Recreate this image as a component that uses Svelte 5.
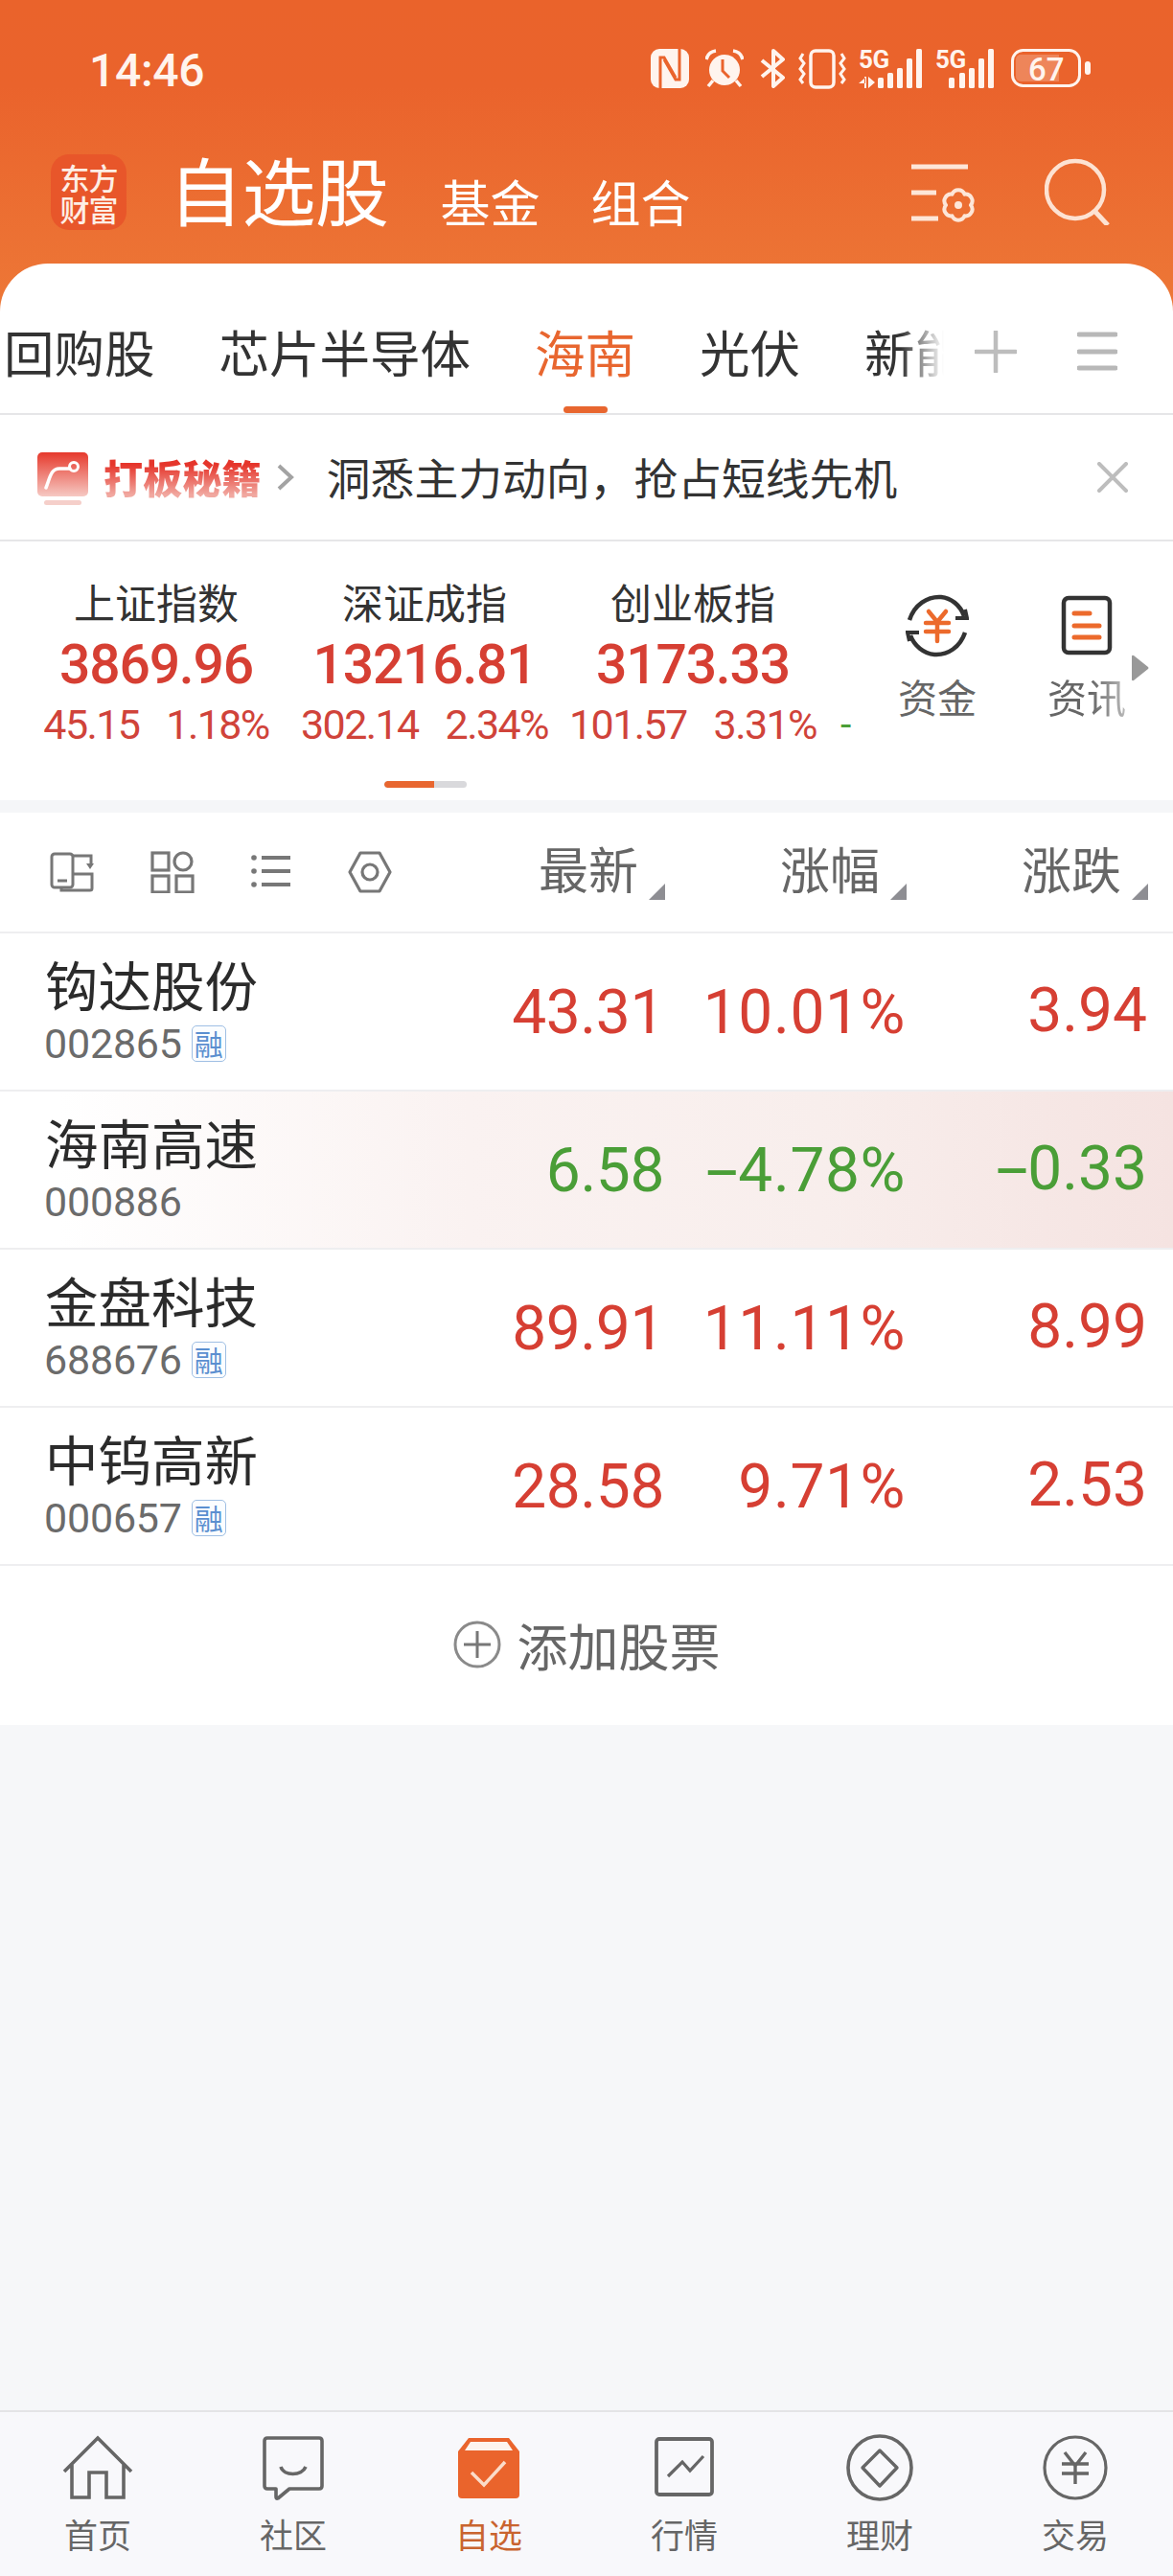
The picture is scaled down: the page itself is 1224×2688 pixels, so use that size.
<script>
  const tabs = ['回购股', '芯片半导体', '海南', '光伏', '新能源'];
  const indices = [
    { name: '上证指数', value: '3869.96', change: '45.15', pct: '1.18%' },
    { name: '深证成指', value: '13216.81', change: '302.14', pct: '2.34%' },
    { name: '创业板指', value: '3173.33', change: '101.57', pct: '3.31%' }
  ];
  const stocks = [
    { name: '钩达股份', code: '002865', tag: true, price: '43.31', pct: '10.01%', diff: '3.94', up: true },
    { name: '海南高速', code: '000886', tag: false, price: '6.58', pct: '4.78%', diff: '0.33', up: false, flash: true },
    { name: '金盘科技', code: '688676', tag: true, price: '89.91', pct: '11.11%', diff: '8.99', up: true },
    { name: '中钨高新', code: '000657', tag: true, price: '28.58', pct: '9.71%', diff: '2.53', up: true }
  ];
</script>

<div class="app">
  <div class="shell">
    <div class="status">
      <span class="time">14:46</span>
      <div class="sys">
        <svg class="nfc" width="40" height="41" viewBox="0 0 40 41"><rect width="40" height="41" rx="9" fill="#fff4ee"/><path d="M10 41V9h4l12 21M30 0v32h-4L14 11" fill="none" stroke="#ea632c" stroke-width="3"/></svg>
        <svg class="alarm" width="40" height="41" viewBox="0 0 40 41"><circle cx="20" cy="22" r="16" fill="#fff4ee"/><path d="M1 11Q3 3 11 2M39 11Q37 3 29 2M8 33l-5 6M32 33l5 6" fill="none" stroke="#fff4ee" stroke-width="3.5"/><path d="M18 11v12l7 7" fill="none" stroke="#ea632c" stroke-width="3"/></svg>
        <svg class="bt" width="28" height="41" viewBox="0 0 28 41"><path d="M3 12l22 18-10 9V2l10 9L3 29" fill="none" stroke="#fff4ee" stroke-width="4" stroke-linejoin="round"/></svg>
        <svg class="vib" width="50" height="42" viewBox="0 0 50 42"><rect x="13" y="2" width="24" height="38" rx="5" fill="none" stroke="#fff4ee" stroke-width="3.5"/><path d="M5 5l-3 5 4 5-4 6 4 5-4 6 3 4M45 5l3 5-4 5 4 6-4 5 4 6-3 4" fill="none" stroke="#fff4ee" stroke-width="3"/></svg>
        <svg class="sig" width="66" height="41" viewBox="0 0 66 41"><text x="0" y="20" class="g5">5G</text><path d="M7 30l-7 6h7zM6 29h2v12H6zM10 29v12l7-6z" fill="#fff4ee"/><rect x="20" y="30" width="6" height="11" rx="1.5"/><rect x="30" y="25" width="6" height="16" rx="1.5"/><rect x="40" y="20" width="6" height="21" rx="1.5"/><rect x="50" y="10" width="6" height="31" rx="1.5"/><rect x="60" y="0" width="6" height="41" rx="1.5"/></svg>
        <svg class="sig2" width="61" height="41" viewBox="0 0 61 41"><text x="0" y="20" class="g5">5G</text><rect x="14" y="30" width="6" height="11" rx="1.5"/><rect x="25" y="25" width="6" height="16" rx="1.5"/><rect x="35" y="20" width="6" height="21" rx="1.5"/><rect x="45" y="10" width="6" height="31" rx="1.5"/><rect x="55" y="0" width="6" height="41" rx="1.5"/></svg>
        <svg class="bat" width="83" height="41" viewBox="0 0 83 41"><rect x="1.5" y="1.5" width="70" height="37" rx="11" fill="none" stroke="#fff4ee" stroke-width="3"/><path d="M10 6h40v28H10a5 5 0 0 1-5-5V11a5 5 0 0 1 5-5z" fill="#fff" fill-opacity=".22"/><text x="18" y="33" class="b67">67</text><rect x="77" y="13" width="6" height="14" rx="3" fill="#fff4ee"/></svg>
      </div>
    </div>

    <div class="head">
      <div class="logo"><span>东方</span><span>财富</span></div>
      <span class="title">自选股</span>
      <span class="sub first">基金</span>
      <span class="sub">组合</span>
      <svg class="cfg" width="70" height="64" viewBox="0 0 70 64"><path d="M0 3h59M0 30h26M0 57h28" stroke="#fde6d8" stroke-width="5" fill="none"/><path d="M55.500 31.700A7 7 0 0 1 62 43A7 7 0 0 1 55.500 54.300A7 7 0 0 1 42.500 54.300A7 7 0 0 1 36 43A7 7 0 0 1 42.500 31.700A7 7 0 0 1 55.500 31.700Z" fill="none" stroke="#fde6d8" stroke-width="4" stroke-linejoin="round"/><circle cx="49" cy="43" r="4" fill="#fde6d8"/></svg>
      <svg class="search" width="70" height="70" viewBox="0 0 70 70"><circle cx="32" cy="33" r="30" fill="none" stroke="#fde2d2" stroke-width="4.5"/><path d="M53 56l13 14" stroke="#fde2d2" stroke-width="5"/></svg>
    </div>

    <div class="panel">
      <div class="tabbar">
        <div class="tabs">
          {#each tabs as t}
            <span class="tab" class:on={t === '海南'}>{t}</span>
          {/each}
        </div>
        <svg class="plus" width="44" height="44" viewBox="0 0 44 44"><path d="M22 1v42M1 22h42" stroke="#bdbdbd" stroke-width="4.5" stroke-linecap="round"/></svg>
        <svg class="lines" width="42" height="42" viewBox="0 0 42 42"><path d="M2 3h38M2 21h38M2 38h38" stroke="#b8b8b8" stroke-width="5" stroke-linecap="round"/></svg>
      </div>

      <div class="banner">
        <svg class="bicon" width="54" height="55" viewBox="0 0 54 55">
          <defs><linearGradient id="bg" x1="0" y1="0" x2="0" y2="1"><stop offset="0" stop-color="#e6392c"/><stop offset="1" stop-color="#f6c9c3"/></linearGradient></defs>
          <rect width="53" height="46" rx="5" fill="url(#bg)"/><rect x="7" y="50" width="39" height="5" rx="2.5" fill="#f5cfca"/>
          <path d="M9 37c4-10 5-20 14-20h11" fill="none" stroke="#fff" stroke-width="3.5" stroke-linecap="round"/><circle cx="38" cy="15" r="4.5" fill="none" stroke="#fff" stroke-width="3"/>
        </svg>
        <span class="btitle">打板秘籍</span>
        <svg class="chev" width="18" height="28" viewBox="0 0 18 28"><path d="M2 2l13 12L2 26" fill="none" stroke="#a3a3a3" stroke-width="4"/></svg>
        <span class="btext">洞悉主力动向，抢占短线先机</span>
        <svg class="close" width="32" height="32" viewBox="0 0 32 32"><path d="M2 2l28 28M30 2L2 30" stroke="#bdbdbd" stroke-width="4" stroke-linecap="round"/></svg>
      </div>

      <div class="market">
        <div class="mrow">
          {#each indices as m}
            <div class="idx">
              <span class="iname">{m.name}</span>
              <span class="ival">{m.value}</span>
              <div class="isub"><span>{m.change}</span><span>{m.pct}</span></div>
            </div>
          {/each}
          <div class="peek">-</div>
          <div class="short">
            <svg width="66" height="66" viewBox="0 0 66 66">
              <path d="M4 27C9 11 23 2 37 3c10 1 20 8 24 20M62 40C57 55 44 64 30 63 19 62 9 54 5 43" fill="none" stroke="#333" stroke-width="4.5"/>
              <path d="M52 25h12l-2-9M14 40H2l2 9" fill="none" stroke="#333" stroke-width="4" />
              <path d="M24 18l9 11 9-11M21 30h24M21 39h24M33 29v20" fill="none" stroke="#ec6a2c" stroke-width="4.5" stroke-linecap="round"/>
            </svg>
            <span>资金</span>
          </div>
          <div class="short fade">
            <svg width="66" height="66" viewBox="0 0 66 66">
              <rect x="9" y="4" width="48" height="57" rx="5" fill="none" stroke="#333" stroke-width="4.5"/>
              <path d="M20 20h16M20 33h26M20 45h26" stroke="#ec6a2c" stroke-width="5" stroke-linecap="round"/>
            </svg>
            <span>资讯</span>
          </div>
          <svg class="more" width="18" height="28" viewBox="0 0 18 28"><path d="M0 2v24q0 2 2 1l15-12q1-1 0-2L2 1q-2-1-2 1z" fill="#999"/></svg>
        </div>
        <div class="pager"><i></i></div>
      </div>

      <div class="gap"></div>

      <div class="grid thead">
        <div class="tools">
          <svg width="46" height="44" viewBox="0 0 46 44"><g fill="none" stroke="#777" stroke-width="3"><rect x="2" y="3" width="22" height="35" rx="3"/><path d="M8 31h10M24 5h19v8M24 24h20v15a2 2 0 0 1-2 2H12v-3"/></g><path d="M38 13h8l-4 6z" fill="#777"/></svg>
          <svg width="46" height="44" viewBox="0 0 46 44"><g fill="none" stroke="#777" stroke-width="3.200"><rect x="2" y="2" width="17" height="18"/><circle cx="34" cy="11" r="9"/><rect x="2" y="26" width="17" height="17"/><rect x="27" y="26" width="17" height="17"/></g></svg>
          <svg width="42" height="44" viewBox="0 0 42 44"><path d="M11 7h30M11 21h30M11 35h30" stroke="#777" stroke-width="4.200"/><g fill="#777"><circle cx="3" cy="7" r="2.800"/><circle cx="3" cy="21" r="2.800"/><circle cx="3" cy="35" r="2.800"/></g></svg>
          <svg width="46" height="44" viewBox="0 0 46 44"><path d="M13 2h20l11 20-11 20H13L2 22z" fill="none" stroke="#777" stroke-width="3.200" stroke-linejoin="round"/><circle cx="23" cy="22" r="8" fill="none" stroke="#777" stroke-width="3.200"/></svg>
        </div>
        <div class="th"><span>最新</span><i></i></div>
        <div class="th"><span>涨幅</span><i></i></div>
        <div class="th"><span>涨跌</span><i></i></div>
      </div>

      {#each stocks as s}
        <div class="grid row" class:flash={s.flash}>
          <div class="who">
            <span class="sname">{s.name}</span>
            <div class="scode"><span>{s.code}</span>{#if s.tag}<b class="tag">融</b>{/if}</div>
          </div>
          <span class="num price" class:down={!s.up}>{s.price}</span>
          <span class="num" class:down={!s.up}>{#if !s.up}<span class="minus">-</span>{/if}{s.pct}</span>
          <span class="num last" class:down={!s.up}>{#if !s.up}<span class="minus">-</span>{/if}{s.diff}</span>
        </div>
      {/each}

      <div class="add">
        <svg width="50" height="50" viewBox="0 0 50 50"><circle cx="25" cy="25" r="23" fill="none" stroke="#8a8a8a" stroke-width="3"/><path d="M25 11v28M11 25h28" stroke="#777" stroke-width="3"/></svg>
        <span>添加股票</span>
      </div>
    </div>
  </div>

  <nav class="nav">
    <div class="item">
      <svg width="74" height="70" viewBox="0 0 74 70"><path d="M2 39L37 4l35 35M10 32v34h18V40h18v26h18V32" fill="none" stroke="#666" stroke-width="3.600"/></svg>
      <span>首页</span>
    </div>
    <div class="item">
      <svg width="74" height="70" viewBox="0 0 74 70"><path d="M10 4h54q3 0 3 3v47q0 3-3 3H33L21 67q-2 1-2-2v-8h-9q-3 0-3-3V7q0-3 3-3z" fill="none" stroke="#666" stroke-width="3.600" stroke-linejoin="round"/><path d="M24 34c3 10 22 10 26 0" fill="none" stroke="#666" stroke-width="3.600"/></svg>
      <span>社区</span>
    </div>
    <div class="item on">
      <svg width="74" height="70" viewBox="0 0 74 70"><path d="M16 4h42l11 14v45a4 4 0 0 1-4 4H9a4 4 0 0 1-4-4V18z" fill="#ea642c"/><path d="M18 8h38l6 9H12z" fill="#fdf4ee"/><path d="M19 40l13 13 22-24" fill="none" stroke="#fbdcc9" stroke-width="3.500"/></svg>
      <span>自选</span>
    </div>
    <div class="item">
      <svg width="74" height="70" viewBox="0 0 74 70"><rect x="8" y="5" width="58" height="58" rx="3" fill="none" stroke="#666" stroke-width="3.800"/><path d="M20 44l15-15 8 9 14-15" fill="none" stroke="#666" stroke-width="3.200"/></svg>
      <span>行情</span>
    </div>
    <div class="item">
      <svg width="74" height="70" viewBox="0 0 74 70"><circle cx="37" cy="35" r="33" fill="none" stroke="#666" stroke-width="3.600"/><path d="M37 17l18 18-18 19-18-19z" fill="none" stroke="#666" stroke-width="3.400" stroke-linejoin="round"/></svg>
      <span>理财</span>
    </div>
    <div class="item">
      <svg width="74" height="70" viewBox="0 0 74 70"><circle cx="37" cy="35" r="32" fill="none" stroke="#666" stroke-width="3.200"/><path d="M26 19l11 14 11-14M23 31h28M23 41h28M37 32v20" fill="none" stroke="#666" stroke-width="3.400"/></svg>
      <span>交易</span>
    </div>
  </nav>
</div>

<style>
  :global(body) { margin: 0; background: #f6f7f9; }
  .app {
    width: 1224px; height: 2688px; display: flex; flex-direction: column; overflow: hidden;
    background: #f6f7f9; font-family: "Noto Sans CJK SC", "Noto Sans", sans-serif; color: #333;
  }
  .shell {
    flex: 1; display: flex; flex-direction: column;
    background: linear-gradient(180deg, #ea632b 0, #ea632c 90px, #ed7837 330px) 0 0 / 100% 330px no-repeat;
  }
  .status { height: 110px; box-sizing: border-box; padding: 51px 0 0 93px; display: flex; align-items: flex-start; }
  .time { font: 500 48px/46px Roboto, sans-serif; color: #fff4ee; letter-spacing: -.3px; }
  .sys { display: flex; margin-left: 466px; height: 42px; }
  .sys svg { display: block; flex: none; }
  .alarm { margin-left: 17px; }
  .bt { margin-left: 16px; }
  .vib { margin-left: 13px; }
  .sig { margin-left: 13px; fill: #fff4ee; }
  .sig2 { margin-left: 14px; fill: #fff4ee; }
  .bat { margin-left: 18px; }
  .g5 { font: 700 26px Roboto, sans-serif; fill: #fff4ee; letter-spacing: -.5px; }
  .b67 { font: 500 33px Roboto, sans-serif; fill: #fff4ee; }

  .head { height: 165px; box-sizing: border-box; padding: 51px 0 0 53px; display: flex; align-items: flex-start; color: #fff; }
  .logo {
    width: 79px; height: 79px; border-radius: 19px; background: #e8562a; flex: none;
    display: flex; flex-direction: column; align-items: center; justify-content: center;
    font-size: 31px; line-height: 33px; font-weight: 500; color: #fdeee5; letter-spacing: -1px;
  }
  .title { font-size: 77px; line-height: 80px; margin-left: 44px; margin-top: -4px; letter-spacing: -.5px; }
  .sub { font-size: 52px; line-height: 60px; margin-top: 19px; margin-left: 53px; }
  .sub.first { margin-left: 54px; }
  .cfg { margin: 10px 0 0 230px; }
  .search { margin: 4px 0 0 69px; }

  .panel { flex: none; display: flex; flex-direction: column; background: #fff; border-radius: 50px 50px 0 0; }
  .tabbar { height: 158px; box-sizing: border-box; border-bottom: 2px solid #e6e6e8; display: flex; align-items: flex-start; }
  .tabs {
    width: 985px; flex: none; height: 156px; display: flex; gap: 67px; padding-left: 4px; box-sizing: border-box; overflow: hidden;
    -webkit-mask-image: linear-gradient(90deg, #000 940px, transparent 985px);
    mask-image: linear-gradient(90deg, #000 940px, transparent 985px);
  }
  .tab { position: relative; flex: none; font-size: 52.500px; line-height: 60px; padding-top: 61px; height: 156px; box-sizing: border-box; color: #333; }
  .tab.on { color: #e8662f; }
  .tab.on::after { content: ''; position: absolute; left: 30px; bottom: 0; width: 46px; height: 7px; background: #e8662f; border-radius: 4px; }
  .plus { margin: 70px 0 0 32px; }
  .lines { margin: 71px 0 0 63px; }

  .banner { height: 132px; box-sizing: border-box; border-bottom: 2px solid #e6e6e8; display: flex; align-items: center; padding-left: 39px; }
  .bicon { margin-top: 2px; }
  .btitle {
    margin-left: 15px; font-size: 41px; font-weight: 900; line-height: 48px; letter-spacing: .2px; margin-bottom: 2px;
    background: linear-gradient(180deg, #e5352b 25%, #f1a8a0 90%); -webkit-background-clip: text; background-clip: text; color: transparent;
  }
  .chev { margin-left: 16px; }
  .btext { margin-left: 34px; font-size: 45.800px; line-height: 56px; color: #333; margin-bottom: 2px; }
  .close { margin-left: 209px; }

  .market { height: 270px; box-sizing: border-box; padding-top: 34px; }
  .mrow { position: relative; display: flex; padding-left: 23px; height: 181px; }
  .idx { width: 280px; flex: none; display: flex; flex-direction: column; align-items: center; }
  .iname { font-size: 43px; line-height: 56px; color: #333; }
  .ival { font: 500 57px/60px Roboto, sans-serif; color: #d63f33; letter-spacing: -1.200px; margin-top: 9px; }
  .isub { display: flex; gap: 28px; font: 400 43px/46px Roboto, sans-serif; color: #d0433a; letter-spacing: -1.600px; margin-top: 9px; }
  .peek { width: 37px; flex: none; color: #4a9e37; font: 400 41px/46px Roboto, sans-serif; padding: 134px 0 0 14px; box-sizing: border-box; }
  .short { width: 156px; flex: none; display: flex; flex-direction: column; align-items: center; margin-top: 21px; }
  .short svg { display: block; }
  .short span { font-size: 41px; line-height: 50px; margin-top: 15px; color: #666; }
  .short.fade span { -webkit-mask-image: linear-gradient(90deg, #000 55%, rgba(0,0,0,.45)); mask-image: linear-gradient(90deg, #000 55%, rgba(0,0,0,.45)); }
  .more { position: absolute; left: 1181px; top: 84px; }
  .pager { margin: 35px 0 0 401px; width: 86px; height: 7px; border-radius: 4px; background: #d9d9dc; overflow: hidden; }
  .pager i { display: block; width: 52px; height: 7px; background: #e8662f; border-radius: 4px 0 0 4px; }
  .gap { height: 13px; background: #f5f6f8; }

  .grid { display: grid; grid-template-columns: 442px 252px 252px 252px; box-sizing: border-box; align-items: center; border-bottom: 2px solid #eeeef0; }
  .thead { height: 126px; }
  .tools { display: flex; gap: 59px; padding-left: 52px; align-items: center; }
  .tools svg { display: block; flex: none; }
  .th { display: flex; justify-content: flex-end; align-items: flex-end; font-size: 52px; line-height: 60px; color: #666; }
  .th span { position: relative; top: -4px; }
  .th i { width: 17px; height: 17px; margin-left: 11px; margin-bottom: 1px; background: #8e8e93; clip-path: polygon(100% 0, 100% 100%, 0 100%); }
  .row { height: 165px; }
  .flash { background: linear-gradient(90deg, #fff 5%, #faf2f1 40%, #f8eeec 70%, #f5e3e1 100%); }
  .who { padding-left: 47px; display: flex; flex-direction: column; align-self: start; padding-top: 20px; }
  .sname { font-size: 55.500px; line-height: 64px; color: #2b2b2b; }
  .scode { display: flex; align-items: center; gap: 10px; font: 400 43px/44px Roboto, sans-serif; color: #6b6b6b; margin: 9px 0 0 -1px; letter-spacing: -.2px; }
  .tag {
    width: 36px; height: 38px; box-sizing: border-box; border: 1.500px solid #9fbfe4; border-radius: 5px; color: #5b8fd0;
    font: 400 30px/34px "Noto Sans CJK SC", sans-serif; text-align: center; background: #fbfdff; overflow: hidden; letter-spacing: 0;
  }
  .num { justify-self: end; padding-right: 1px; margin-top: 3px; font: 400 64px/70px Roboto, sans-serif; color: #d63f33; letter-spacing: .6px; }
  .num.price { letter-spacing: -.4px; }
  .num.down { color: #4a9e37; }
  .num.last { margin-top: 0; margin-bottom: 2px; letter-spacing: 0; }
  .minus { display: inline-block; width: 32px; transform: scaleX(1.900); transform-origin: 50% 50%; text-align: center; }
  .add { height: 166px; box-sizing: border-box; display: flex; align-items: center; justify-content: center; gap: 17px; font-size: 53px; color: #666; padding-bottom: 2px; }
  .add svg { display: block; }

  .nav { height: 173px; flex: none; box-sizing: border-box; border-top: 2px solid #e4e4e6; background: #f8f8fb; display: grid; grid-template-columns: repeat(6, 204px); padding-top: 23px; }
  .item { display: flex; flex-direction: column; align-items: center; font-size: 35px; line-height: 44px; color: #666; }
  .item svg { display: block; }
  .item span { margin-top: 12px; }
  .item.on { color: #c9642f; }
</style>
